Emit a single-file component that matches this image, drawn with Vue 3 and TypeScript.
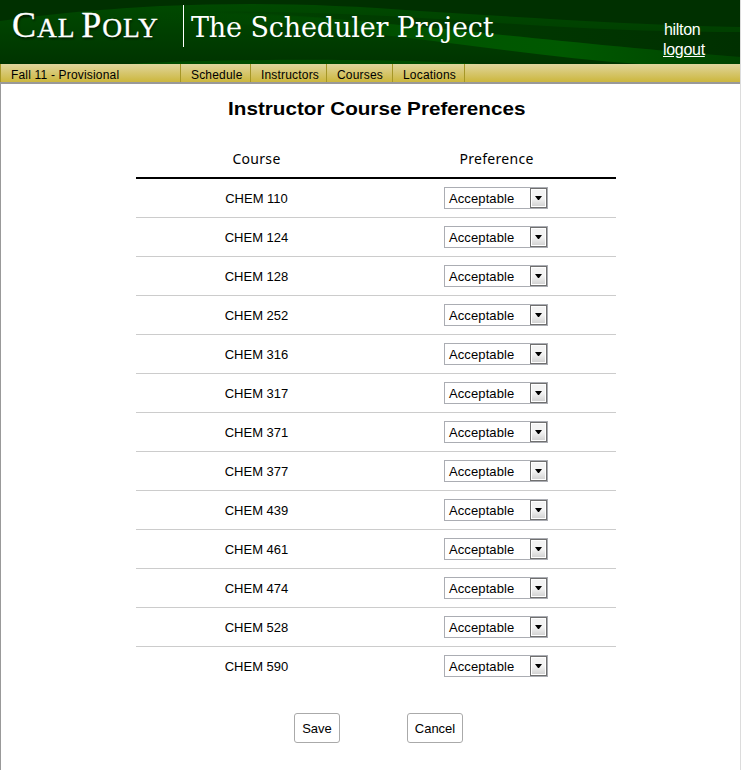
<script setup lang="ts">
import { reactive, ref } from 'vue'

interface CoursePreference {
  course: string
  preference: string
}

const user = ref('hilton')
const menu = ['Schedule', 'Instructors', 'Courses', 'Locations']
const numbers = [110, 124, 128, 252, 316, 317, 371, 377, 439, 461, 474, 528, 590]
const rows = reactive<CoursePreference[]>(
  numbers.map((n) => ({ course: `CHEM ${n}`, preference: 'Acceptable' })),
)
</script>

<template>
  <div class="page">
    <header class="banner">
      <svg class="swoosh" viewBox="0 0 740 64" preserveAspectRatio="none" aria-hidden="true">
        <defs>
          <linearGradient id="base" x1="0" y1="0" x2="0" y2="1">
            <stop offset="0" stop-color="#004b00" />
            <stop offset="1" stop-color="#003400" />
          </linearGradient>
          <linearGradient id="shade" x1="0" y1="0" x2="1" y2="0">
            <stop offset="0" stop-color="#003800" stop-opacity="0" />
            <stop offset="0.5" stop-color="#003900" />
            <stop offset="1" stop-color="#003000" />
          </linearGradient>
          <linearGradient id="beam" x1="0" y1="0" x2="1" y2="0">
            <stop offset="0" stop-color="#004800" stop-opacity="0" />
            <stop offset="0.5" stop-color="#005500" />
            <stop offset="0.7" stop-color="#005900" />
            <stop offset="1" stop-color="#004300" />
          </linearGradient>
        </defs>
        <rect width="740" height="64" fill="url(#base)" />
        <path d="M0 0H740V27C620 24 520 17 420 11C330 4 250 2 160 6C90 10 40 15 0 21Z" fill="#003000" />
        <path d="M170 12C330 9 450 20 530 25C610 30 680 32 740 32V57C620 48 500 34 420 27C330 17 250 14 170 12Z" fill="url(#shade)" />
        <path d="M170 12C260 10 350 20 420 27C500 34 620 48 740 57V64H640C560 59 480 46 400 37C310 26 240 22 150 24Z" fill="url(#beam)" />
        <path d="M130 64C230 58 400 59 480 64Z" fill="#004c00" />
      </svg>
      <div class="brand">C<small>AL</small> P<small>OLY</small></div>
      <div class="divider"></div>
      <div class="project">The Scheduler Project</div>
      <div class="account">
        <span>{{ user }}</span>
        <a href="#">logout</a>
      </div>
    </header>
    <nav class="menu">
      <span class="item term">Fall 11 - Provisional</span>
      <span v-for="m in menu" :key="m" class="item" :class="m.toLowerCase()">{{ m }}</span>
    </nav>
    <main class="content">
      <h1><span>Instructor Course Preferences</span></h1>
      <div class="grid head">
        <div>Course</div>
        <div>Preference</div>
      </div>
      <div v-for="r in rows" :key="r.course" class="grid row">
        <div class="course">{{ r.course }}</div>
        <div class="cell">
          <div class="select">
            <span class="value">{{ r.preference }}</span>
            <span class="drop">
              <svg width="7" height="4" viewBox="0 0 7 4"><path d="M0 0H7L4 4H3Z" fill="#000" /></svg>
            </span>
          </div>
        </div>
      </div>
      <div class="actions">
        <button class="save">Save</button>
        <button class="cancel">Cancel</button>
      </div>
    </main>
  </div>
</template>

<style>
body {
  margin: 0;
  background: #fff;
}
</style>

<style scoped>
.page {
  box-sizing: border-box;
  width: 741px;
  height: 770px;
  overflow: hidden;
  border-right: 1px solid #dcdcdc;
  font-family: "Liberation Sans", Arial, sans-serif;
  font-size: 13px;
  color: #000;
}
.banner {
  position: relative;
  display: flex;
  height: 64px;
  color: #fff;
}
.swoosh {
  position: absolute;
  inset: 0;
  width: 100%;
  height: 100%;
}
.brand,
.divider,
.project,
.account {
  position: relative;
  white-space: nowrap;
}
.brand {
  width: 170px;
  padding-left: 12px;
  font: 36px/51px "Liberation Serif", serif;
  letter-spacing: 0.9px;
  word-spacing: -4px;
  text-shadow: 1px 2px 2px #001c00;
  -webkit-text-stroke: 0.3px #fff;
}
.brand small {
  font-size: 27.5px;
}
.divider {
  width: 1px;
  height: 42px;
  margin: 5px 7px 0 1px;
  background: #fff;
}
.project {
  width: 472px;
  font: 27px/56px "DejaVu Serif", serif;
  letter-spacing: -0.14px;
}
.account {
  display: flex;
  flex-direction: column;
  align-items: flex-start;
  padding-top: 20px;
  font-size: 16px;
  letter-spacing: -0.3px;
  line-height: 20px;
}
.account span {
  padding-left: 1px;
}
.account a {
  color: #fff;
}
.menu {
  display: flex;
  box-sizing: border-box;
  height: 20px;
  border-bottom: 2px solid #999;
  background: linear-gradient(#e0d59d, #ccb73d);
}
.item {
  box-sizing: border-box;
  padding-left: 10px;
  border-right: 1px solid #a69727;
  font-size: 12px;
  letter-spacing: 0.18px;
  line-height: 22px;
  white-space: nowrap;
}
.term {
  width: 181px;
  border-left: 1px solid #a69727;
}
.schedule { width: 70px; }
.instructors { width: 76px; }
.courses { width: 66px; }
.locations { width: 72px; }
.content {
  box-sizing: border-box;
  height: 686px;
  padding-left: 135px;
  border-left: 1px solid #999;
}
h1 {
  width: 481px;
  height: 55px;
  margin: 0;
  padding-top: 14px;
  box-sizing: border-box;
  font-size: 19px;
  line-height: 22px;
  text-align: center;
}
h1 span {
  display: inline-block;
  transform: scaleX(1.087);
}
.grid {
  display: grid;
  grid-template-columns: 240px 240px;
  box-sizing: border-box;
  width: 480px;
  align-items: center;
  text-align: center;
}
.head {
  height: 40px;
  border-bottom: 2px solid #000;
  font: 14px/38px "Noto Sans", sans-serif;
  letter-spacing: 0.3px;
}
.head div {
  padding: 1px 0 0 1px;
}
.row {
  height: 39px;
  border-bottom: 1px solid #ccc;
}
.row:nth-last-child(2) {
  border-bottom-color: transparent;
}
.course {
  padding-left: 1px;
}
.cell {
  display: flex;
  justify-content: center;
}
.select {
  display: flex;
  box-sizing: border-box;
  width: 104px;
  height: 22px;
  border: 1px solid #abadb3;
}
.value {
  flex: 1;
  padding-left: 4px;
  text-align: left;
  letter-spacing: 0.1px;
  line-height: 21px;
}
.drop {
  display: flex;
  align-items: center;
  justify-content: center;
  box-sizing: border-box;
  width: 17px;
  height: 20px;
  border: 1px solid #707070;
  box-shadow: inset 0 0 0 1px #fff;
  background: linear-gradient(#f4f4f4 50%, #d0d0d0);
}
.drop svg {
  display: block;
}
.actions {
  display: flex;
  gap: 67px;
  padding: 27px 0 0 158px;
}
button {
  box-sizing: border-box;
  height: 30px;
  padding: 0;
  border: 1px solid #aaa;
  border-radius: 3px;
  background: #fff;
  color: #000;
  font: 13px "Liberation Sans", Arial, sans-serif;
}
.save { width: 46px; }
.cancel { width: 56px; }
</style>
